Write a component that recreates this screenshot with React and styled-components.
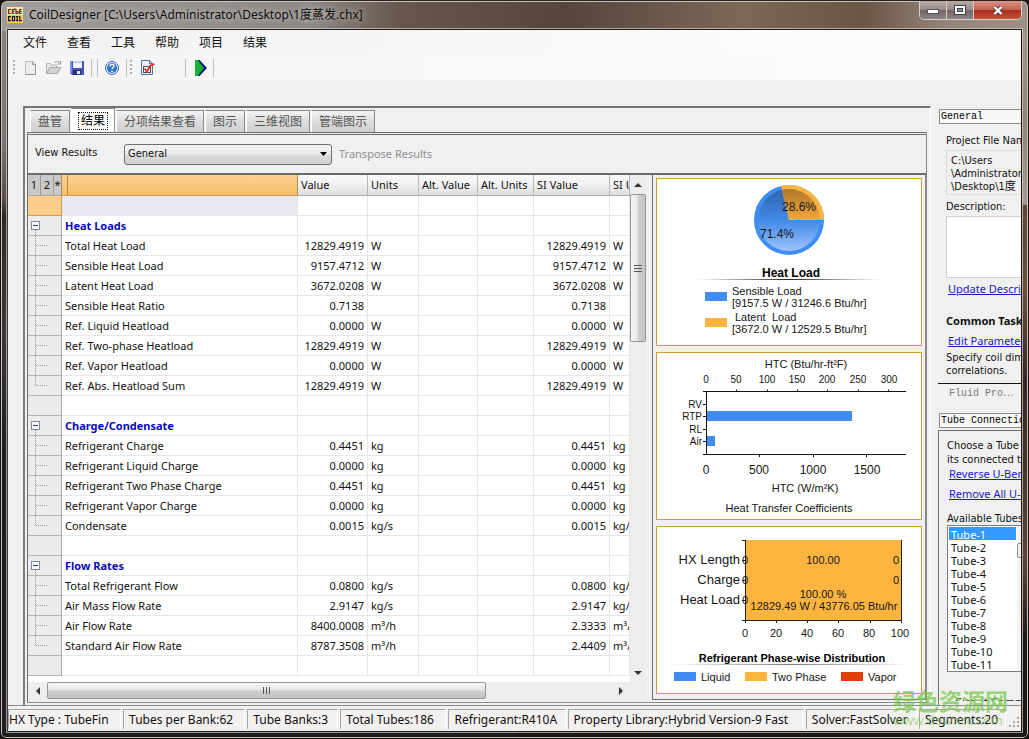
import React from 'react';
import styled, { createGlobalStyle, css } from 'styled-components';

const uiFont = '"Noto Sans", "Noto Sans CJK SC", sans-serif';
const narrowFont = '"DejaVu Sans Condensed", "Noto Sans", "Noto Sans CJK SC", sans-serif';
const monoFont = '"Liberation Mono", "Noto Sans CJK SC", monospace';
const chartFont = '"Liberation Sans", Arial, sans-serif';

const GlobalStyle = createGlobalStyle`
  *, *::before, *::after { box-sizing: border-box; }
  body { margin: 0; background: #1c1614; font-family: ${uiFont}; color: #111; }
  button, select, textarea, input { font: inherit; color: inherit; margin: 0; border-radius: 0; }
`;

/* ---------- window frame ---------- */

const Window = styled.div`
  position: relative;
  display: flex;
  flex-direction: column;
  min-height: 100vh;
  padding: 0 6px 6px;
  border: 1px solid #15100e;
  border-top-color: #2a1f1b;
  border-radius: 7px 7px 6px 6px;
  box-shadow: inset 0 0 0 1px #c9c4c0;
  background:
    linear-gradient(90deg, #a09c99 0, #8d8884 30%, #66564d 39%, #55453d 55%, #7b6858 72%, #6a5546 84%, #948478 92%, #9b9188 100%) top / 100% 30px no-repeat,
    linear-gradient(#8e8580 0, #777 140px, #5d4a48 200px, #2b2827 215px, #3b3a3a 330px, #1b1d21 450px, #1e1e20 100%) left / 50% 100% no-repeat,
    linear-gradient(#a39a90 0, #8f857b 120px, #a29a92 203px, #5c4636 205px, #6e4f35 290px, #342723 380px, #5b4436 560px, #1c1818 640px) right / 50% 100% no-repeat;
`;

const TitleBar = styled.header`
  display: flex;
  align-items: flex-start;
  height: 28px;
`;

const Title = styled.h1`
  flex: 1;
  display: flex;
  align-items: center;
  gap: 6px;
  height: 28px;
  margin: 0;
  font-size: 12px;
  font-weight: 400;
  line-height: 28px;
  white-space: nowrap;
  color: #0c0c0c;
  text-shadow: 0 0 6px rgba(255, 255, 255, 0.5), 0 0 10px rgba(255, 255, 255, 0.4);
`;

const WindowControls = styled.div`
  display: flex;
  border: 1px solid #d8d0ca;
  border-top: 0;
  border-radius: 0 0 5px 5px;
  overflow: hidden;
`;

const ControlButton = styled.button`
  display: flex;
  align-items: center;
  justify-content: center;
  width: ${(p) => (p.$close ? '47px' : '27px')};
  height: 18px;
  padding: 0;
  border: 0;
  border-right: 1px solid #d5cdc8;
  background: ${(p) =>
    p.$close
      ? 'linear-gradient(#d9958a, #c4604f 48%, #a92f1b 52%, #c8503a)'
      : 'linear-gradient(#b9aca8, #998c88 48%, #73666a 52%, #8e8286)'};
  &:last-child { border-right: 0; }
`;

const Client = styled.div`
  flex: 1;
  display: flex;
  flex-direction: column;
  min-width: 0;
  border: 1px solid #1e1917;
  border-left-color: #3d3a39;
  background: #f0f0f0;
  box-shadow: 0 0 0 1px rgba(215, 208, 203, 0.7);
`;

/* ---------- menu and tool bars ---------- */

const MenuBar = styled.nav`
  display: flex;
  align-items: center;
  height: 25px;
  padding-left: 5px;
  background: linear-gradient(90deg, #f1f1f1, #fbfbfb 75%, #fcfcfc);
`;

const MenuItem = styled.button`
  padding: 0 10px;
  border: 0;
  background: none;
  font-size: 12px;
  line-height: 24px;
`;

const ToolBar = styled.div`
  display: flex;
  align-items: center;
  height: 25px;
  padding-left: 5px;
  background: linear-gradient(90deg, #f4f4f4, #fafafa 60%, #fbfbfb);
`;

const ToolButton = styled.button`
  display: flex;
  align-items: center;
  justify-content: center;
  width: 23px;
  height: 24px;
  padding: 0;
  border: 0;
  background: none;
`;

const Grip = styled.span`
  width: 2px;
  height: 16px;
  margin-right: 4px;
  background: repeating-linear-gradient(#b0b0b0 0 2px, transparent 2px 4px);
`;

const Divider = styled.span`
  width: 1px;
  height: 18px;
  margin: ${(p) => p.$gap || '0 3px'};
  background: #bdbdbd;
`;

/* ---------- main area ---------- */

const Main = styled.main`
  flex: 1;
  display: flex;
  gap: 6px;
  min-width: 0;
  padding: 26px 0 0 15px;
`;

const Workspace = styled.section`
  flex: 1;
  display: flex;
  flex-direction: column;
  min-width: 0;
  padding: 0 3px 2px 2px;
  border-top: 2px solid #737373;
  border-left: 2px solid #7d7d7d;
  border-right: 1px solid #fff;
`;

const TabRow = styled.div`
  display: flex;
  align-items: flex-end;
  gap: 1px;
  height: 24px;
  padding-left: 3px;
`;

const Tab = styled.button`
  height: ${(p) => (p.$active ? 24 : 22)}px;
  padding: 0 7px;
  border: 1px solid #8a8a8a;
  border-left-color: #fff;
  border-bottom: 0;
  background: linear-gradient(#f4f4f4, #dcdcdc 50%, #cfcfcf);
  font-size: 12px;
  line-height: 20px;
  color: #555;
  white-space: nowrap;
  ${(p) =>
    p.$active &&
    css`
      background: #fff;
      color: #000;
      padding: 0 6px;
      border-right-color: #999;
      span { display: block; padding: 0 2px; line-height: 16px; border: 1px dotted #111; }
    `}
`;

const Page = styled.div`
  flex: 1;
  display: flex;
  flex-direction: column;
  min-width: 0;
  padding-bottom: 2px;
  border-top: 3px double #6d6d6d;
  border-left: 1px solid #6f6f6f;
  border-right: 1px solid #8a8a8a;
  border-bottom: 1px solid #8a8a8a;
`;

const FilterBar = styled.div`
  display: flex;
  align-items: center;
  height: 40px;
  padding-left: 7px;
  border-bottom: 2px solid #6a6a6a;
  font-size: 11px;
  line-height: 16px;
`;

const FilterLabel = styled.label`
  width: 89px;
  padding-bottom: 3px;
  font-family: ${narrowFont};
`;

const FilterSelect = styled.select`
  appearance: none;
  width: 208px;
  height: 21px;
  padding: 0 20px 0 3px;
  border: 1px solid #707070;
  border-radius: 3px;
  font-family: ${narrowFont};
  background:
    url("data:image/svg+xml,%3Csvg xmlns='http://www.w3.org/2000/svg' width='7' height='4'%3E%3Cpath d='M0 0h7L3.5 4z'/%3E%3C/svg%3E") right 4px center no-repeat,
    linear-gradient(#f2f2f2, #ebebeb 48%, #dddddd 52%, #cfcfcf);
`;

const DisabledAction = styled.button`
  padding: 0 7px;
  border: 0;
  background: none;
  &:disabled { color: #8f8f8f; }
`;

const Split = styled.div`
  flex: 1;
  display: flex;
  gap: 6px;
  min-width: 0;
`;

/* ---------- results grid ---------- */

const GridArea = styled.div`
  flex: 1;
  display: flex;
  flex-direction: column;
  min-width: 0;
`;

const GridTop = styled.div`
  flex: 1;
  display: flex;
  min-width: 0;
  background: #fff;
`;

const GridClip = styled.div`
  flex: 1;
  min-width: 0;
  overflow: hidden;
`;

const Table = styled.table`
  width: 100%;
  table-layout: fixed;
  border-collapse: separate;
  border-spacing: 0;
  font-size: 11px;
  line-height: 16px;
`;

const HeadCell = styled.th`
  height: 21px;
  padding: 0 3px;
  overflow: hidden;
  text-align: left;
  font-weight: 400;
  white-space: nowrap;
  border-right: 1px solid #b5b5b5;
  border-bottom: 1px solid #a8a8a8;
  background: linear-gradient(#fafafa, #f0f0f0 50%, #dedede);
  ${(p) =>
    p.$outline &&
    css`
      padding: 0;
      background: #c9c9c9;
      border-right-color: #a98b5c;
    `}
  ${(p) =>
    p.$selected &&
    css`
      background: linear-gradient(90deg, transparent 5px, #b98838 5px 6px, transparent 6px), linear-gradient(#fbd293, #f3bd66);
      border-right-color: #b98f4e;
      border-bottom-color: #d79a3e;
    `}
`;

const Levels = styled.span`
  display: flex;
  span {
    flex: 0 0 13px;
    border-right: 1px solid #9b9b9b;
    text-align: center;
    line-height: 20px;
  }
  span:last-child { flex: 1; border: 0; }
`;

const OutlineCell = styled.td`
  height: 20px;
  padding: 0;
  background: ${(p) => (p.$selected ? '#fbcf8b' : '#ececec')};
  border-right: 1px solid ${(p) => (p.$selected ? '#d79a3e' : '#a9a9a9')};
  border-bottom: 1px solid ${(p) => (p.$selected ? '#d79a3e' : '#b4b4b4')};
  svg { display: block; }
`;

const Cell = styled.td`
  height: 20px;
  padding: 0 3px;
  overflow: hidden;
  white-space: nowrap;
  text-align: ${(p) => (p.$num ? 'right' : 'left')};
  border-right: 1px solid #e6e6e6;
  border-bottom: 1px solid #e6e6e6;
  background: ${(p) => (p.$selected ? '#e9e9f3' : '#fff')};
  ${(p) =>
    p.$group &&
    css`
      font-weight: 700;
      color: #0a0ab4;
    `}
`;

const ScrollBar = styled.div`
  display: flex;
  flex-direction: ${(p) => (p.$vertical ? 'column' : 'row')};
  flex: 0 0 16px;
  background: #ededed;
`;

const ScrollArrow = styled.button`
  display: flex;
  align-items: center;
  justify-content: center;
  flex: 0 0 19px;
  padding: 0;
  border: 0;
  background: none;
`;

const ScrollThumb = styled.div`
  display: flex;
  align-items: center;
  justify-content: center;
  flex: 0 0 ${(p) => p.$size};
  border: 1px solid #979797;
  border-radius: 2px;
  background: linear-gradient(${(p) => (p.$vertical ? '90deg' : '180deg')}, #f5f5f5, #e6e6e6 48%, #cfcfcf 52%, #c4c4c4);
`;

const ScrollSpace = styled.div`
  flex: 1;
`;

const GridBottom = styled.div`
  display: flex;
  height: 18px;
  padding: 0 16px 1px 0;
  background: #ededed;
  & > div { flex: 1; }
`;

/* ---------- charts ---------- */

const ChartColumn = styled.aside`
  flex: 0 0 274px;
  display: flex;
  flex-direction: column;
  gap: 6px;
  padding: 3px 3px 4px;
  border-left: 1px solid #6f6f6f;
  border-right: 1px solid #8a7f8f;
  border-bottom: 1px solid #6f6f6f;
`;

const ChartCard = styled.figure`
  margin: 0;
  height: 168px;
  border: 1px solid #d49a3a;
  background: #fff;
  svg { display: block; }
  text { font-family: ${chartFont}; font-size: 11px; fill: #161616; }
  text.large { font-size: 13px; }
  text.medium { font-size: 12px; }
  text.small { font-size: 10px; }
  text.title { font-weight: 700; fill: #000; }
`;

/* ---------- side bar ---------- */

const SideBar = styled.aside`
  flex: 0 0 84px;
  display: flex;
  flex-direction: column;
  min-width: 0;
  overflow: hidden;
  padding: 3px 0 0 1px;
  font-size: 11px;
  line-height: 13px;
  white-space: nowrap;
`;

const SideHeading = styled.h2`
  flex: none;
  height: 15px;
  margin: 0 0 0 1px;
  padding-left: 1px;
  overflow: hidden;
  border: 1px solid #8c8c8c;
  border-right: 0;
  background: #f8f8f8;
  font-family: ${monoFont};
  font-size: 10px;
  font-weight: 400;
  line-height: 13px;
  color: #000;
`;

const SideBody = styled.div`
  height: ${(p) => p.$height};
  flex: ${(p) => (p.$framed ? '1 0 auto' : 'none')};
  overflow: hidden;
  padding-left: 8px;
  border-bottom: ${(p) => (p.$closed ? '1px solid #111' : '0')};
  ${(p) =>
    p.$framed &&
    css`
      margin-top: 2px;
      border-top: 1px solid #6f6f6f;
      border-left: 1px solid #6f6f6f;
    `}
`;

const SideLabel = styled.label`
  display: block;
  margin: 0;
  padding: ${(p) => p.$pad};
  font-family: ${narrowFont};
  line-height: 14px;
`;

const PathBox = styled.output`
  display: block;
  height: 45px;
  padding: 3px 4px;
  border: 1px solid #dcdcdc;
  border-right: 0;
  font-family: ${narrowFont};
  line-height: 13px;
  white-space: pre;
`;

const DescriptionBox = styled.textarea`
  display: block;
  width: 100%;
  height: 62px;
  border: 1px solid #d0d0d0;
  border-right: 0;
  background: #fff;
  resize: none;
`;

const SideLink = styled.a`
  display: block;
  padding: ${(p) => p.$pad};
  color: #1b1bc8;
  line-height: 14px;
`;

const SideTitle = styled.h3`
  margin: 0;
  padding: 17px 0 5px;
  font-size: 11px;
  font-weight: 700;
  line-height: 16px;
`;

const SideText = styled.p`
  margin: 0;
  font-family: ${narrowFont};
  line-height: 13px;
`;

const CollapsedHeading = styled.button`
  flex: none;
  height: 29px;
  padding: 0 0 10px 11px;
  border: 0;
  background: none;
  text-align: left;
  font-family: ${monoFont};
  font-size: 10px;
  line-height: 19px;
  color: #777;
`;

const ListFrame = styled.div`
  display: flex;
  width: 100px;
  height: 147px;
  border: 1px solid #7d7d7d;
  background: #fff;
`;

const TubeList = styled.select`
  width: 69px;
  height: 145px;
  padding: 1px;
  border: 0;
  outline: 0;
  overflow: hidden;
  background: #fff;
  scrollbar-width: none;
  font-size: 11px;
  option {
    height: 13px;
    min-height: 13px;
    padding: 0 2px;
    line-height: 13px;
    color: #111;
  }
  option:checked {
    background: #3399ff linear-gradient(#3399ff, #3399ff);
    color: #fff;
  }
`;

const ListScroll = styled.div`
  flex: 1;
  padding-top: 17px;
  background: #f3f3f3;
  &::before {
    content: '';
    display: block;
    height: 15px;
    border: 1px solid #8f8f8f;
    border-radius: 2px;
    background: #f1f1f1;
  }
`;

const CutHeading = styled.p`
  height: 6px;
  margin: 23px 0 0 8px;
  overflow: hidden;
  line-height: 14px;
`;

/* ---------- status bar ---------- */

const StatusBar = styled.footer`
  display: flex;
  gap: 2px;
  height: 26px;
  padding: 3px 0 2px;
  border-top: 1px solid #8b8b8b;
  background: #f3f0f0;
  font-size: 12px;
  line-height: 19px;
  white-space: nowrap;
`;

const StatusCell = styled.span`
  flex: ${(p) => `${p.$width} 1 ${p.$width}px`};
  min-width: 0;
  padding-left: ${(p) => (p.$first ? 0 : 5)}px;
  border-left: 1px solid #a6a6a6;
  border-top: 1px solid #a6a6a6;
  border-right: 1px solid #fff;
`;

const SizeGrip = styled.svg`
  align-self: flex-end;
  flex: none;
`;

const Watermark = styled.div`
  position: absolute;
  right: 19px;
  bottom: 11px;
  width: 116px;
  color: rgba(124, 200, 80, 0.75);
  font-size: 23px;
  font-weight: 700;
  line-height: 24px;
  white-space: nowrap;
  pointer-events: none;
  small { display: block; font-size: 13px; font-weight: 400; line-height: 14px; color: rgba(124, 200, 80, 0.6); }
`;

/* ---------- icons ---------- */

const AppIcon = () => (
  <svg width="16" height="16" viewBox="0 0 16 16" aria-hidden="true">
    <rect width="16" height="16" fill="#f6c667" />
    <rect width="16" height="8" fill="#fbe3ac" />
    <g fill="none" stroke="#a5202c" strokeWidth="1.2">
      <path d="M4 2.600H1.600V6.400H4M7.500 2.600H5.400V6.400H7.500M5.400 4.500H7.300M9 2V6.400H11V4.500H9M14.800 2.600H12.600V6.400H14.800M12.600 4.500H14.500M7 1.500L8.500 3" />
    </g>
    <g fill="none" stroke="#1d1513" strokeWidth="1.200">
      <path d="M4 9.600H1.600V13.600H4M5.400 9.600H7.600V13.600H5.400ZM9 9.600H11.400M10.200 9.600V13.600M9 13.600H11.400M12.800 9V13.600H15" />
    </g>
  </svg>
);

const NewIcon = () => (
  <svg width="14" height="16" viewBox="0 0 14 16" aria-hidden="true">
    <path d="M1.500 1.500h7l3 3v10h-10z" fill="#ececec" stroke="#bdbdbd" />
    <path d="M8.500 1.500v3h3M11.500 5v9.500h-10" fill="none" stroke="#969696" />
  </svg>
);

const OpenIcon = () => (
  <svg width="17" height="16" viewBox="0 0 17 16" aria-hidden="true">
    <path d="M1.500 13.500v-10h4l1 1.500h5v3" fill="#e6e6e6" stroke="#b3b3b3" />
    <path d="M1.500 13.500l3-6h11.500l-3.500 6z" fill="#d2d2d2" stroke="#a9a9a9" />
    <path d="M9.500 3c1.500-2 4-2 5.500 0M15.500 1v3h-3" fill="none" stroke="#999" />
  </svg>
);

const SaveIcon = () => (
  <svg width="16" height="16" viewBox="0 0 16 16" aria-hidden="true">
    <path d="M1 1h14v14H3l-2-2z" fill="#4b57b8" />
    <path d="M1 1h2v12H1z" fill="#7f8ade" />
    <path d="M4 1h9v7H4z" fill="#f1f3ff" />
    <path d="M4 1h9v2H4z" fill="#c7cdf2" />
    <path d="M4 10h8v5H4z" fill="#2c3279" />
    <path d="M8 11h3v3H8z" fill="#e6e8f5" />
  </svg>
);

const HelpIcon = () => (
  <svg width="16" height="16" viewBox="0 0 16 16" aria-hidden="true">
    <circle cx="8" cy="8" r="6.500" fill="#dceafb" stroke="#3b70bd" />
    <circle cx="8" cy="8" r="5" fill="#2f6fc9" />
    <path d="M6 6.500c0-2.600 4-2.600 4-.3 0 1.500-2 1.500-2 3" fill="none" stroke="#fff" strokeWidth="1.400" />
    <circle cx="8" cy="11.300" r="0.900" fill="#fff" />
  </svg>
);

const CheckIcon = () => (
  <svg width="17" height="17" viewBox="0 0 17 17" aria-hidden="true">
    <path d="M2.500 1.500h8l3 3v11h-11z" fill="#e9f0fc" stroke="#5a6f9d" />
    <path d="M10.500 1.500v3h3" fill="none" stroke="#5a6f9d" />
    <rect x="4.500" y="7.500" width="7" height="6" fill="#fff" stroke="#4a4a62" />
    <path d="M5.500 9.500l2.500 3 3.500-6 4-1.500" fill="none" stroke="#dd2b1d" strokeWidth="1.800" />
  </svg>
);

const RunIcon = () => (
  <svg width="12" height="16" viewBox="0 0 12 16" aria-hidden="true">
    <path d="M3 0h1.500L12 8l-7.500 8H3z" fill="#10127e" />
    <path d="M0 0h2.500L9 8l-6.500 8H0z" fill="#14b232" />
  </svg>
);

const Arrow = ({ d }) => (
  <svg width="8" height="8" viewBox="0 0 8 8" aria-hidden="true">
    <path d={d} fill="#333" />
  </svg>
);

const ThumbGrip = ({ vertical }) => (
  <svg width="8" height="8" viewBox="0 0 8 8" aria-hidden="true">
    <path d={vertical ? 'M0 1.500h8M0 4.500h8M0 7.500h8' : 'M.5 0v7M3.500 0v7M6.500 0v7'} stroke="#555" />
  </svg>
);

const TreeMark = ({ kind }) => (
  <svg width="32" height="19" viewBox="0 0 32 19" aria-hidden="true">
    {kind === 'group' && (
      <g>
        <rect x="3.500" y="5.500" width="8" height="8" fill="#fafafa" stroke="#7f8a9c" />
        <path d="M5 9.500h5" stroke="#3a3a6a" />
        <path d="M7.500 14v5" stroke="#8f8f8f" strokeDasharray="1 1" />
      </g>
    )}
    {(kind === 'item' || kind === 'last') && (
      <path
        d={kind === 'last' ? 'M7.500 0v10M8 9.500h12' : 'M7.500 0v19M8 9.500h12'}
        fill="none"
        stroke="#999"
        strokeDasharray="1 1"
      />
    )}
  </svg>
);

/* ---------- data ---------- */

const rows = [
  { kind: 'blank', selected: true },
  { kind: 'group', name: 'Heat Loads' },
  { kind: 'item', name: 'Total Heat Load', value: '12829.4919', unit: 'W' },
  { kind: 'item', name: 'Sensible Heat Load', value: '9157.4712', unit: 'W' },
  { kind: 'item', name: 'Latent Heat Load', value: '3672.0208', unit: 'W' },
  { kind: 'item', name: 'Sensible Heat Ratio', value: '0.7138' },
  { kind: 'item', name: 'Ref. Liquid Heatload', value: '0.0000', unit: 'W' },
  { kind: 'item', name: 'Ref. Two-phase Heatload', value: '12829.4919', unit: 'W' },
  { kind: 'item', name: 'Ref. Vapor Heatload', value: '0.0000', unit: 'W' },
  { kind: 'last', name: 'Ref. Abs. Heatload Sum', value: '12829.4919', unit: 'W' },
  { kind: 'blank' },
  { kind: 'group', name: 'Charge/Condensate' },
  { kind: 'item', name: 'Refrigerant Charge', value: '0.4451', unit: 'kg' },
  { kind: 'item', name: 'Refrigerant Liquid Charge', value: '0.0000', unit: 'kg' },
  { kind: 'item', name: 'Refrigerant Two Phase Charge', value: '0.4451', unit: 'kg' },
  { kind: 'item', name: 'Refrigerant Vapor Charge', value: '0.0000', unit: 'kg' },
  { kind: 'last', name: 'Condensate', value: '0.0015', unit: 'kg/s' },
  { kind: 'blank' },
  { kind: 'group', name: 'Flow Rates' },
  { kind: 'item', name: 'Total Refrigerant Flow', value: '0.0800', unit: 'kg/s' },
  { kind: 'item', name: 'Air Mass Flow Rate', value: '2.9147', unit: 'kg/s' },
  { kind: 'item', name: 'Air Flow Rate', value: '8400.0008', unit: 'm³/h', si: '2.3333', siUnit: 'm³/s' },
  { kind: 'last', name: 'Standard Air Flow Rate', value: '8787.3508', unit: 'm³/h', si: '2.4409', siUnit: 'm³/s' },
  { kind: 'blank' },
];

const statusCells = [
  ['HX Type : TubeFin', 113],
  ['Tubes per Bank:62', 122],
  ['Tube Banks:3', 91],
  ['Total Tubes:186', 106],
  ['Refrigerant:R410A', 117],
  ['Property Library:Hybrid Version-9 Fast', 236],
  ['Solver:FastSolver', 111],
  ['Segments:20', 87],
];

const tubes = Array.from({ length: 11 }, (_, i) => `Tube-${i + 1}`);

/* ---------- parts ---------- */

const ResultsGrid = () => (
  <GridArea>
    <GridTop>
      <GridClip>
        <Table>
          <colgroup>
            <col style={{ width: 34 }} />
            <col />
            <col style={{ width: 70 }} />
            <col style={{ width: 51 }} />
            <col style={{ width: 59 }} />
            <col style={{ width: 56 }} />
            <col style={{ width: 76 }} />
            <col style={{ width: 20 }} />
          </colgroup>
          <thead>
            <tr>
              <HeadCell $outline><Levels><span>1</span><span>2</span><span>*</span></Levels></HeadCell>
              <HeadCell $selected aria-label="Name" />
              <HeadCell>Value</HeadCell>
              <HeadCell>Units</HeadCell>
              <HeadCell>Alt. Value</HeadCell>
              <HeadCell>Alt. Units</HeadCell>
              <HeadCell>SI Value</HeadCell>
              <HeadCell>SI Units</HeadCell>
            </tr>
          </thead>
          <tbody>
            {rows.map((r, i) => (
              <tr key={i}>
                <OutlineCell $selected={r.selected}><TreeMark kind={r.kind} /></OutlineCell>
                <Cell $group={r.kind === 'group'} $selected={r.selected}>{r.name}</Cell>
                <Cell $num>{r.value}</Cell>
                <Cell>{r.unit}</Cell>
                <Cell />
                <Cell />
                <Cell $num>{r.si || r.value}</Cell>
                <Cell>{r.siUnit || r.unit}</Cell>
              </tr>
            ))}
          </tbody>
        </Table>
      </GridClip>
      <ScrollBar $vertical>
        <ScrollArrow aria-label="Scroll up"><Arrow d="M0 6l4-4 4 4z" /></ScrollArrow>
        <ScrollThumb $vertical $size="148px"><ThumbGrip vertical /></ScrollThumb>
        <ScrollSpace />
        <ScrollArrow aria-label="Scroll down"><Arrow d="M0 2l4 4 4-4z" /></ScrollArrow>
      </ScrollBar>
    </GridTop>
    <GridBottom>
      <ScrollBar>
        <ScrollArrow aria-label="Scroll left"><Arrow d="M6 0L2 4l4 4z" /></ScrollArrow>
        <ScrollThumb $size="73%"><ThumbGrip /></ScrollThumb>
        <ScrollSpace />
        <ScrollArrow aria-label="Scroll right"><Arrow d="M2 0l4 4-4 4z" /></ScrollArrow>
      </ScrollBar>
    </GridBottom>
  </GridArea>
);

const HeatLoadChart = () => (
  <ChartCard aria-label="Heat Load">
    <svg width="100%" height="166" viewBox="0 0 264 166">
      <defs>
        <linearGradient id="blueFill" x1="0" y1="0" x2="0" y2="1">
          <stop offset="0" stopColor="#2f64ad" />
          <stop offset="0.500" stopColor="#4189e6" />
          <stop offset="1" stopColor="#9cc2fb" />
        </linearGradient>
        <linearGradient id="orangeFill" x1="0" y1="0" x2="0" y2="1">
          <stop offset="0" stopColor="#ad7a2c" />
          <stop offset="1" stopColor="#f0a63b" />
        </linearGradient>
        <linearGradient id="rule" x1="0" y1="0" x2="1" y2="0">
          <stop offset="0" stopColor="#333" stopOpacity="0" />
          <stop offset="0.500" stopColor="#222" />
          <stop offset="1" stopColor="#333" stopOpacity="0" />
        </linearGradient>
      </defs>
      <circle cx="132" cy="41" r="35" fill="#418cf0" />
      <circle cx="132" cy="41" r="31" fill="url(#blueFill)" />
      <path d="M132 41L124.100 6.900A35 35 0 0 1 167 41Z" fill="#fcb441" />
      <path d="M132 40L125 10.800A31 31 0 0 1 163 40Z" fill="url(#orangeFill)" />
      <text className="medium" x="142" y="32" textAnchor="middle">28.6%</text>
      <text className="medium" x="120" y="59" textAnchor="middle">71.4%</text>
      <text className="title medium" x="134" y="98" textAnchor="middle">Heat Load</text>
      <rect x="40" y="100" width="184" height="1" fill="url(#rule)" />
      <rect x="48" y="113" width="22" height="9" fill="#418cf0" />
      <text x="75" y="116">Sensible Load</text>
      <text x="75" y="128">[9157.5 W / 31246.6 Btu/hr]</text>
      <rect x="48" y="139" width="22" height="9" fill="#fcb441" />
      <text x="78" y="142">Latent</text>
      <text x="115" y="142">Load</text>
      <text x="75" y="154">[3672.0 W / 12529.5 Btu/hr]</text>
    </svg>
  </ChartCard>
);

const HtcChart = () => (
  <ChartCard aria-label="Heat Transfer Coefficients">
    <svg width="100%" height="166" viewBox="0 0 264 166">
      <text x="149" y="15" textAnchor="middle">HTC (Btu/hr-ft²F)</text>
      {[0, 50, 100, 150, 200, 250, 300].map((n, i) => (
        <text key={n} className="small" x={[49, 79, 110, 140, 170, 201, 232][i]} y="30" textAnchor="middle">{n}</text>
      ))}
      <rect x="50" y="58" width="145" height="10" fill="#418cf0" />
      <rect x="50" y="83" width="8" height="10" fill="#418cf0" />
      <path
        d="M46 38.500H249M46 101.500H249M49.500 38V102M79.500 36.500v2M110.500 36.500v2M140.500 36.500v2M170.500 36.500v2M201.500 36.500v2M231.500 36.500v2M102.500 101v3M156.500 101v3M209.500 101v3M46 51.500h4M46 63.500h4M46 76.500h4M46 88.500h4"
        stroke="#111"
        fill="none"
      />
      <text className="small" x="45" y="55" textAnchor="end">RV</text>
      <text className="small" x="45" y="67" textAnchor="end">RTP</text>
      <text className="small" x="45" y="80" textAnchor="end">RL</text>
      <text className="small" x="45" y="92" textAnchor="end">Air</text>
      {[0, 500, 1000, 1500].map((n, i) => (
        <text key={n} className="medium" x={[49, 102, 156, 210][i]} y="121" textAnchor="middle">{n}</text>
      ))}
      <text x="148" y="139" textAnchor="middle">HTC (W/m²K)</text>
      <text x="132" y="159" textAnchor="middle">Heat Transfer Coefficients</text>
    </svg>
  </ChartCard>
);

const PhaseChart = () => (
  <ChartCard aria-label="Refrigerant Phase-wise Distribution">
    <svg width="100%" height="166" viewBox="0 0 264 166">
      <rect x="88" y="13" width="156" height="80" fill="#fcb441" />
      <path
        d="M85 13.500H89M85 93.500H245M88.500 13V96M244.500 13V96M119.500 93v3M150.500 93v3M181.500 93v3M213.500 93v3M85 33.500h4M85 53.500h4M85 73.500h4"
        stroke="#222"
        fill="none"
      />
      <text className="large" x="83" y="37" textAnchor="end">HX Length</text>
      <text className="large" x="83" y="57" textAnchor="end">Charge</text>
      <text className="large" x="83" y="77" textAnchor="end">Heat Load</text>
      {[37, 57, 77].map((y) => <text key={y} x="88" y={y} textAnchor="middle">0</text>)}
      <text x="166" y="37" textAnchor="middle">100.00</text>
      <text x="239" y="37" textAnchor="middle">0</text>
      <text x="239" y="57" textAnchor="middle">0</text>
      <text x="166" y="71" textAnchor="middle">100.00 %</text>
      <text x="167" y="83" textAnchor="middle">12829.49 W / 43776.05 Btu/hr</text>
      {[0, 20, 40, 60, 80, 100].map((n, i) => (
        <text key={n} x={88 + i * 31} y="110" textAnchor="middle">{n}</text>
      ))}
      <text className="title" x="135" y="135" textAnchor="middle">Refrigerant Phase-wise Distribution</text>
      <rect x="12" y="137" width="244" height="1" fill="url(#rule)" opacity="0.600" />
      <rect x="17" y="145" width="22" height="9" fill="#418cf0" />
      <text x="44" y="154">Liquid</text>
      <rect x="88" y="145" width="22" height="9" fill="#fcb441" />
      <text x="115" y="154">Two Phase</text>
      <rect x="184" y="145" width="22" height="9" fill="#e0400a" />
      <text x="211" y="154">Vapor</text>
    </svg>
  </ChartCard>
);

const Properties = () => (
  <SideBar>
    <SideHeading>General</SideHeading>
    <SideBody $height="260px" $closed>
      <SideLabel htmlFor="project-path" $pad="10px 0 2px">Project File Name:</SideLabel>
      <PathBox id="project-path">{'C:\\Users\n\\Administrator\n\\Desktop\\1度'}</PathBox>
      <SideLabel htmlFor="description" $pad="5px 0 2px">Description:</SideLabel>
      <DescriptionBox id="description" />
      <SideLink href="#description" $pad="4px 2px 0">Update Description</SideLink>
      <SideTitle>Common Tasks</SideTitle>
      <SideLink href="#parameters" $pad="0 2px 3px">Edit Parameters</SideLink>
      <SideText>Specify coil dimensions<br />correlations.</SideText>
    </SideBody>
    <CollapsedHeading>Fluid Pro⋯</CollapsedHeading>
    <SideHeading>Tube Connections</SideHeading>
    <SideBody $framed $height="272px">
      <SideLabel htmlFor="tubes" $pad="8px 0 0">Choose a Tube to see<br />its connected tubes</SideLabel>
      <SideLink href="#reverse" $pad="0 2px 6px">Reverse U-Bends</SideLink>
      <SideLink href="#remove" $pad="0 2px 11px">Remove All U-Bends</SideLink>
      <SideText>Available Tubes</SideText>
      <ListFrame>
        <TubeList id="tubes" size={11} defaultValue="Tube-1">
          {tubes.map((t) => <option key={t}>{t}</option>)}
        </TubeList>
        <ListScroll />
      </ListFrame>
      <CutHeading>Circuit Commands</CutHeading>
    </SideBody>
  </SideBar>
);

export default function App() {
  return (
    <>
      <GlobalStyle />
      <Window>
        <TitleBar>
          <Title><AppIcon />CoilDesigner [C:\Users\Administrator\Desktop\1度蒸发.chx]</Title>
          <WindowControls>
            <ControlButton aria-label="Minimize">
              <svg width="12" height="10" viewBox="0 0 12 10"><rect x="0.500" y="4.500" width="11" height="4" fill="#fff" stroke="#555" /></svg>
            </ControlButton>
            <ControlButton aria-label="Maximize">
              <svg width="12" height="10" viewBox="0 0 12 10">
                <rect x="0.500" y="0.500" width="11" height="9" fill="#fff" stroke="#444" />
                <rect x="3.500" y="3.500" width="5" height="3" fill="#888" stroke="#444" />
              </svg>
            </ControlButton>
            <ControlButton $close aria-label="Close">
              <svg width="12" height="11" viewBox="0 0 12 11">
                <path d="M2.500 2l7 7M9.500 2l-7 7" stroke="#5b3a3a" strokeWidth="4" />
                <path d="M2.500 2l7 7M9.500 2l-7 7" stroke="#fff" strokeWidth="2.400" />
              </svg>
            </ControlButton>
          </WindowControls>
        </TitleBar>
        <Client>
          <MenuBar>
            {['文件', '查看', '工具', '帮助', '项目', '结果'].map((m) => <MenuItem key={m}>{m}</MenuItem>)}
          </MenuBar>
          <ToolBar>
            <Grip />
            <ToolButton aria-label="New"><NewIcon /></ToolButton>
            <ToolButton aria-label="Open"><OpenIcon /></ToolButton>
            <ToolButton aria-label="Save"><SaveIcon /></ToolButton>
            <Divider />
            <Divider $gap="0 2px" />
            <ToolButton aria-label="Help"><HelpIcon /></ToolButton>
            <Divider />
            <Grip />
            <ToolButton aria-label="Check"><CheckIcon /></ToolButton>
            <Divider $gap="0 3px 0 26px" />
            <ToolButton aria-label="Run"><RunIcon /></ToolButton>
            <Divider $gap="0 1px" />
          </ToolBar>
          <Main>
            <Workspace>
              <TabRow role="tablist">
                {['盘管', '结果', '分项结果查看', '图示', '三维视图', '管端图示'].map((t) => (
                  <Tab key={t} role="tab" aria-selected={t === '结果'} $active={t === '结果'}><span>{t}</span></Tab>
                ))}
              </TabRow>
              <Page>
                <FilterBar>
                  <FilterLabel htmlFor="view">View Results</FilterLabel>
                  <FilterSelect id="view" defaultValue="General"><option>General</option></FilterSelect>
                  <DisabledAction disabled>Transpose Results</DisabledAction>
                </FilterBar>
                <Split>
                  <ResultsGrid />
                  <ChartColumn>
                    <HeatLoadChart />
                    <HtcChart />
                    <PhaseChart />
                  </ChartColumn>
                </Split>
              </Page>
            </Workspace>
            <Properties />
          </Main>
          <StatusBar>
            {statusCells.map(([text, width], i) => (
              <StatusCell key={text} $width={width} $first={i === 0}>{text}</StatusCell>
            ))}
            <SizeGrip width="13" height="13" viewBox="0 0 13 13" aria-hidden="true">
              <path d="M9 1h2v2H9zM5 5h2v2H5zM9 5h2v2H9zM1 9h2v2H1zM5 9h2v2H5zM9 9h2v2H9z" fill="#a9a9a9" />
            </SizeGrip>
          </StatusBar>
        </Client>
        <Watermark>绿色资源网<small>www.downcc.com</small></Watermark>
      </Window>
    </>
  );
}
